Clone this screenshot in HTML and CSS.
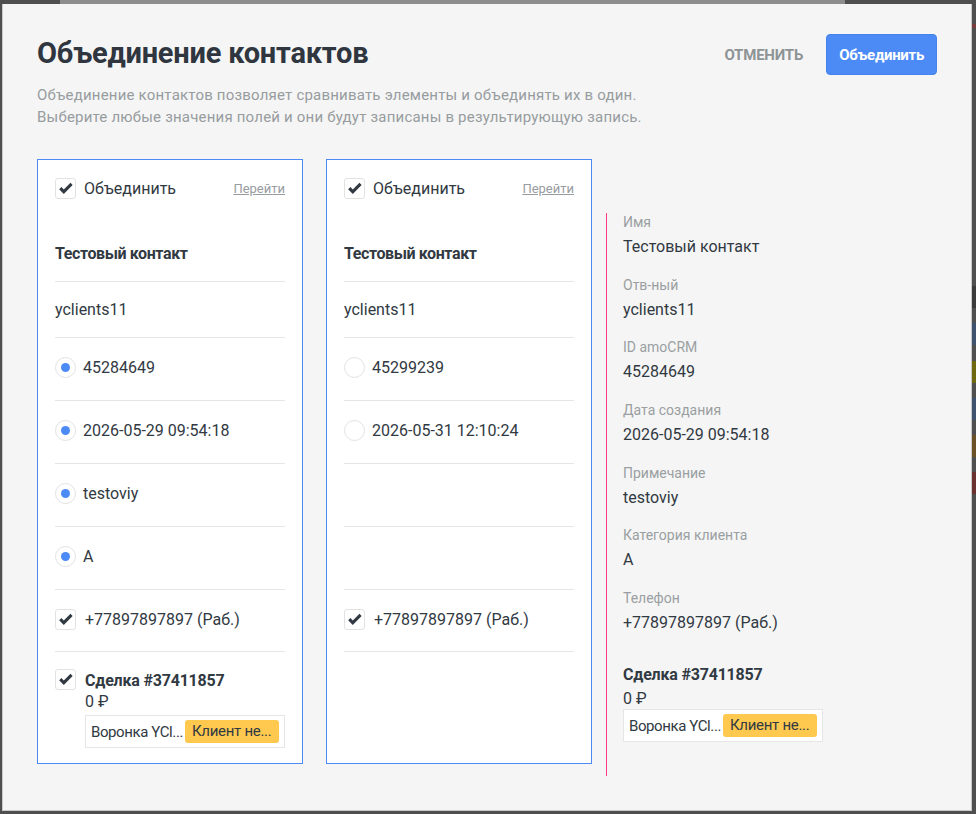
FILE: index.html
```html
<!DOCTYPE html>
<html lang="ru">
<head>
  <meta charset="UTF-8">
  <title>Объединение контактов</title>
  <link rel="stylesheet" href="styles.css">
</head>
<body>

  <div class="modal">

    <!-- Header: title, hint and actions -->
    <div class="modal-head">
      <div class="modal-title">
        <h1>Объединение контактов</h1>
        <p class="hint">Объединение контактов позволяет сравнивать элементы и объединять их в один.<br>Выберите любые значения полей и они будут записаны в результирующую запись.</p>
      </div>
      <div class="actions">
        <span class="btn-cancel">ОТМЕНИТЬ</span>
        <button class="btn-merge">Объединить</button>
      </div>
    </div>

    <div class="merge">

      <!-- First contact -->
      <div class="card">
        <div class="card-head">
          <span class="check"><svg viewBox="0 0 21 21"><path d="M3.5 11.2 L6 8.8 L8.6 11.6 L16 4.2 L18.4 6.6 L8.6 16.6 Z"/></svg></span>
          <span class="card-label">Объединить</span>
          <a class="card-link">Перейти</a>
        </div>
        <div class="row row-name">Тестовый контакт</div>
        <div class="row row-plain">yclients11</div>
        <div class="row row-radio"><span class="radio on"></span>45284649</div>
        <div class="row row-radio"><span class="radio on"></span>2026-05-29 09:54:18</div>
        <div class="row row-radio"><span class="radio on"></span>testoviy</div>
        <div class="row row-radio"><span class="radio on"></span>A</div>
        <div class="row row-check"><span class="check"><svg viewBox="0 0 21 21"><path d="M3.5 11.2 L6 8.8 L8.6 11.6 L16 4.2 L18.4 6.6 L8.6 16.6 Z"/></svg></span>+77897897897 (Раб.)</div>
        <div class="deal-row">
          <span class="check"><svg viewBox="0 0 21 21"><path d="M3.5 11.2 L6 8.8 L8.6 11.6 L16 4.2 L18.4 6.6 L8.6 16.6 Z"/></svg></span>
          <div class="deal">
            <div class="deal-title">Сделка #37411857</div>
            <div class="deal-sum">0 ₽</div>
            <div class="pipeline"><span class="pipe-name">Воронка YCl...</span><span class="pipe-status">Клиент не...</span></div>
          </div>
        </div>
      </div>

      <!-- Second contact -->
      <div class="card">
        <div class="card-head">
          <span class="check"><svg viewBox="0 0 21 21"><path d="M3.5 11.2 L6 8.8 L8.6 11.6 L16 4.2 L18.4 6.6 L8.6 16.6 Z"/></svg></span>
          <span class="card-label">Объединить</span>
          <a class="card-link">Перейти</a>
        </div>
        <div class="row row-name">Тестовый контакт</div>
        <div class="row row-plain">yclients11</div>
        <div class="row row-radio"><span class="radio"></span>45299239</div>
        <div class="row row-radio"><span class="radio"></span>2026-05-31 12:10:24</div>
        <div class="row row-radio"></div>
        <div class="row row-radio"></div>
        <div class="row row-check"><span class="check"><svg viewBox="0 0 21 21"><path d="M3.5 11.2 L6 8.8 L8.6 11.6 L16 4.2 L18.4 6.6 L8.6 16.6 Z"/></svg></span>+77897897897 (Раб.)</div>
      </div>

      <!-- Resulting record -->
      <div class="result">
        <div class="field"><div class="field-label">Имя</div><div class="field-value">Тестовый контакт</div></div>
        <div class="field"><div class="field-label">Отв-ный</div><div class="field-value">yclients11</div></div>
        <div class="field"><div class="field-label">ID amoCRM</div><div class="field-value">45284649</div></div>
        <div class="field"><div class="field-label">Дата создания</div><div class="field-value">2026-05-29 09:54:18</div></div>
        <div class="field"><div class="field-label">Примечание</div><div class="field-value">testoviy</div></div>
        <div class="field"><div class="field-label">Категория клиента</div><div class="field-value">A</div></div>
        <div class="field"><div class="field-label">Телефон</div><div class="field-value">+77897897897 (Раб.)</div></div>
        <div class="deal result-deal">
          <div class="deal-title">Сделка #37411857</div>
          <div class="deal-sum">0 ₽</div>
          <div class="pipeline"><span class="pipe-name">Воронка YCl...</span><span class="pipe-status">Клиент не...</span></div>
        </div>
      </div>

    </div>
  </div>

  <!-- edge of the page behind the overlay -->
  <div class="page-edge">
    <span class="edge-bar red" style="margin-top:24px"></span>
    <span class="edge-bar dark" style="margin-top:258px"></span>
    <span class="edge-bar blue" style="margin-top:15px"></span>
    <span class="edge-bar olive" style="margin-top:16px"></span>
    <span class="edge-bar blue" style="margin-top:15px"></span>
    <span class="edge-bar brown" style="margin-top:15px"></span>
    <span class="edge-bar wine" style="margin-top:15px"></span>
  </div>

</body>
</html>
```

FILE: styles.css
```css
body {
  margin: 0;
  height: 814px;
  padding-top: 4px;
  box-sizing: border-box;
  display: flex;
  overflow: hidden;
  font-family: Roboto, "Liberation Sans", sans-serif;
  color: #313942;
  background: linear-gradient(#8d8d8d, #8d8d8d) 60px 0 / 785px 4px no-repeat, #4f4f4f;
}

.modal {
  margin-left: 2px;
  width: 970px;
  height: 807px;
  flex: none;
  box-sizing: border-box;
  padding: 0 34px;
  background-color: #f5f5f5;
  border: 1px solid #c9c9c9;
  border-top: none;
}

.modal-head {
  display: flex;
  justify-content: space-between;
  align-items: flex-start;
  padding-top: 30px;
}

h1 {
  margin: 2px 0 0;
  font-size: 29px;
  line-height: 34px;
  font-weight: 700;
  color: #2f3640;
  letter-spacing: -0.2px;
}

.hint {
  margin: 14px 0 0;
  font-size: 15px;
  line-height: 22px;
  color: #979c9f;
  letter-spacing: 0.2px;
}

.actions {
  display: flex;
  align-items: center;
  gap: 23px;
}

.btn-cancel {
  font-size: 15px;
  font-weight: 700;
  color: #8e9396;
  letter-spacing: -0.2px;
}

.btn-merge {
  height: 41px;
  padding: 0 12px;
  border: 1px solid #4583ec;
  border-radius: 4px;
  background-color: #4c8bf5;
  color: #fff;
  font-family: inherit;
  font-size: 15px;
  font-weight: 700;
  letter-spacing: -0.3px;
}

.merge {
  display: flex;
  align-items: flex-start;
  margin-top: 31px;
}

.card {
  width: 266px;
  height: 605px;
  flex: none;
  box-sizing: border-box;
  margin-right: 23px;
  padding: 17px 17px 0;
  background-color: #fff;
  border: 1px solid #4c8bf5;
}

.card-head {
  display: flex;
  align-items: center;
  height: 22px;
}

.card-label {
  flex: 1;
  margin-left: 8px;
  font-size: 16px;
}

.card-link {
  font-size: 13px;
  color: #979c9f;
  text-decoration: underline;
}

.check {
  width: 21px;
  height: 21px;
  flex: none;
  box-sizing: border-box;
  border: 1px solid #e2e2e2;
  border-radius: 3px;
  background-color: #fff;
  display: flex;
}

.check svg {
  width: 19px;
  height: 19px;
  fill: #313942;
}

.radio {
  width: 21px;
  height: 21px;
  flex: none;
  box-sizing: border-box;
  border: 1px solid #e2e2e2;
  border-radius: 50%;
  background-color: #fff;
  display: flex;
  align-items: center;
  justify-content: center;
  margin-right: 7px;
}

.radio.on::after {
  content: "";
  width: 9px;
  height: 9px;
  border-radius: 50%;
  background-color: #4c8bf5;
}

.row {
  display: flex;
  align-items: center;
  box-sizing: border-box;
  border-bottom: 1px solid #e6e6e6;
  font-size: 16px;
}

.row-name {
  margin-top: 26px;
  height: 57px;
  font-weight: 700;
  letter-spacing: -0.4px;
}

.row-plain {
  height: 56px;
}

.row-radio {
  height: 63px;
  padding-bottom: 3px;
}

.row-check {
  height: 62px;
  padding-bottom: 3px;
}

.row-check .check {
  margin-right: 9px;
}

.deal-row {
  display: flex;
  align-items: flex-start;
  padding-top: 17px;
}

.deal-row .deal {
  margin: 2px 0 0 9px;
}

.deal-title {
  font-size: 16px;
  line-height: 20px;
  font-weight: 700;
  letter-spacing: -0.2px;
}

.deal-sum {
  font-size: 16px;
  line-height: 22px;
}

.pipeline {
  display: flex;
  align-items: center;
  justify-content: space-between;
  width: 200px;
  box-sizing: border-box;
  margin-top: 2px;
  padding: 4px 5px;
  background-color: #fff;
  border: 1px solid #e6e6e6;
  font-size: 15px;
}

.pipe-name {
  white-space: nowrap;
  letter-spacing: -0.4px;
}

.pipe-status {
  width: 94px;
  flex: none;
  box-sizing: border-box;
  height: 23px;
  line-height: 23px;
  padding: 0 7px;
  border-radius: 3px;
  background-color: #ffc94f;
  white-space: nowrap;
  letter-spacing: -0.3px;
}

.result {
  margin: 54px 0 0 -9px;
  height: 563px;
  flex: 1;
  box-sizing: border-box;
  padding-left: 16px;
  border-left: 1px solid #fb3a83;
}

.field {
  margin-bottom: 17.7px;
}

.field-label {
  font-size: 14px;
  line-height: 18px;
  margin-bottom: 5px;
  color: #9a9fa2;
}

.field-value {
  font-size: 16px;
  line-height: 22px;
}

.result-deal {
  margin-top: 31px;
}

.result-deal .deal-title {
  margin-bottom: 3px;
}

.result-deal .pipeline {
  margin-top: -1px;
}

.page-edge {
  flex: 1;
  display: flex;
  flex-direction: column;
  margin-top: -4px;
}

.edge-bar {
  height: 22px;
  flex: none;
}

.edge-bar.red { height: 4px; background-color: #7a3b3b; }
.edge-bar.dark { background-color: #3b3b3b; }
.edge-bar.blue { background-color: #3e5270; }
.edge-bar.olive { background-color: #6e6810; }
.edge-bar.brown { background-color: #6a5127; }
.edge-bar.wine { background-color: #6a3131; }
```
